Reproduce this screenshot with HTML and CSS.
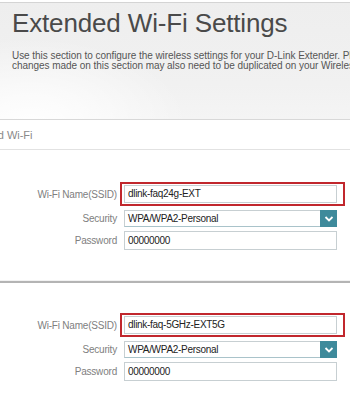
FILE: index.html
```html
<!DOCTYPE html>
<html>
<head>
<meta charset="utf-8">
<link rel="stylesheet" href="styles.css">
</head>
<body>
<div class="page">
  <header class="hero">
    <h1 class="title">Extended Wi-Fi Settings</h1>
    <p class="desc">Use this section to configure the wireless settings for your D-Link Extender. Please note that<br>changes made on this section may also need to be duplicated on your Wireless client.</p>
  </header>
  <div class="section-bar"><span class="section-name">2.4GHz Extended Wi-Fi</span></div>

  <div class="form form-first">
    <label class="lbl">Wi-Fi Name(SSID)</label>
    <div class="hl"><div class="field">dlink-faq24g-EXT</div></div>
    <label class="lbl">Security</label>
    <div class="select"><span class="select-text">WPA/WPA2-Personal</span><span class="drop"><svg width="10" height="8" viewBox="0 0 10 8"><path d="M1.5 2 L5 5.5 L8.5 2" fill="none" stroke="#fff" stroke-width="1.8"/></svg></span></div>
    <label class="lbl">Password</label>
    <div class="field pw">00000000</div>
  </div>

  <div class="divider"></div>

  <div class="form form-second">
    <label class="lbl">Wi-Fi Name(SSID)</label>
    <div class="hl"><div class="field">dlink-faq-5GHz-EXT5G</div></div>
    <label class="lbl">Security</label>
    <div class="select"><span class="select-text">WPA/WPA2-Personal</span><span class="drop"><svg width="10" height="8" viewBox="0 0 10 8"><path d="M1.5 2 L5 5.5 L8.5 2" fill="none" stroke="#fff" stroke-width="1.8"/></svg></span></div>
    <label class="lbl">Password</label>
    <div class="field pw">00000000</div>
  </div>
</div>
</body>
</html>
```
FILE: styles.css
```css
html, body {
  margin: 0;
  padding: 0;
  background: #fff;
}
body {
  font-family: "Liberation Sans", Arial, sans-serif;
  width: 350px;
  height: 400px;
  overflow: hidden;
}
.page {
  padding-top: 2px;
}
.hero {
  border-top: 1px solid #d4d4d4;
  height: 117px;
  padding: 5px 0 0 12px;
  box-sizing: border-box;
  background:
    radial-gradient(ellipse 160px 90px at 30px 125px, #ffffff 0%, rgba(255,255,255,0.6) 45%, rgba(255,255,255,0) 100%),
    linear-gradient(#eeeeee, #f1f1f1 70%, #f4f4f4);
  white-space: nowrap;
  overflow: hidden;
}
.title {
  margin: 0;
  font-weight: normal;
  font-size: 26px;
  line-height: 30px;
  color: #4a4a4a;
  letter-spacing: -0.15px;
}
.desc {
  margin: 13px 0 0 0;
  font-size: 10px;
  line-height: 10px;
  color: #555;
  letter-spacing: -0.05px;
}
.section-bar {
  border-top: 1px solid #d8d8d8;
  border-bottom: 1px solid #e2e2e2;
  height: 31px;
  box-sizing: border-box;
  overflow: hidden;
  white-space: nowrap;
  display: flex;
  align-items: center;
}
.section-name {
  margin-left: -83px;
  font-size: 11px;
  color: #8a8a8a;
}
.form {
  display: grid;
  grid-template-columns: 120px 225px;
  align-items: center;
  row-gap: 4px;
}
.form-first {
  margin-top: 32px;
}
.form-second {
  margin-top: 30px;
}
.lbl {
  justify-self: end;
  padding-right: 3px;
  font-size: 10px;
  color: #808080;
  letter-spacing: -0.2px;
}
.hl {
  border: 2px solid #c1272d;
  height: 24px;
  box-sizing: border-box;
  padding: 1px 6px 0 2px;
}
.field {
  border: 1px solid #c7cfd2;
  height: 18px;
  box-sizing: border-box;
  background: #fff;
  font-size: 10px;
  line-height: 16px;
  padding-left: 3px;
  color: #222;
  letter-spacing: -0.3px;
}
.pw {
  margin-left: 4px;
  width: 213px;
  height: 19px;
  line-height: 17px;
}
.select {
  margin-left: 4px;
  width: 213px;
  height: 17px;
  box-sizing: border-box;
  border: 1px solid #c7cfd2;
  border-bottom-color: #a9c3ca;
  display: flex;
  align-items: center;
  justify-content: space-between;
  font-size: 10px;
  color: #222;
  letter-spacing: -0.3px;
}
.select-text {
  padding-left: 3px;
}
.drop {
  width: 17px;
  height: 17px;
  margin-right: -1px;
  background: #3e8a9b;
  display: flex;
  align-items: center;
  justify-content: center;
}
.divider {
  border-top: 1px solid #f2f2f2;
  height: 2px;
  background: #b4b4b4;
  margin-top: 30px;
}
```
